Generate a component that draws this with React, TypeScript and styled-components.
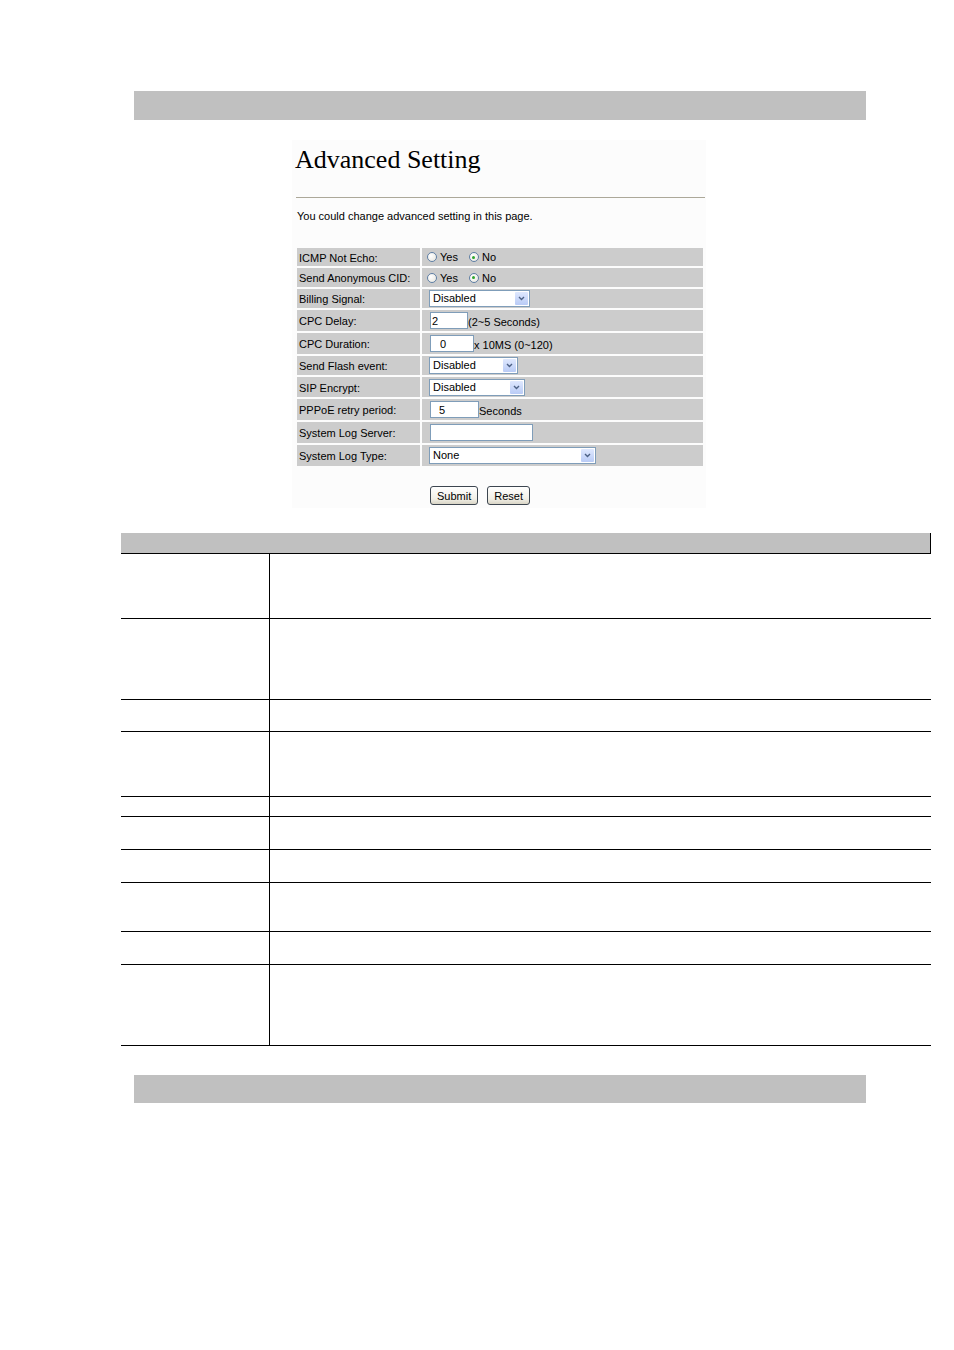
import { Fragment, type ReactNode } from "react";
import styled, { createGlobalStyle } from "styled-components";

const GlobalStyle = createGlobalStyle`
  body {
    margin: 0;
    background: #fff;
    font-family: "Liberation Sans", Arial, sans-serif;
    color: #000;
  }
`;

const Page = styled.div`
  padding: 91px 0 200px;
`;

const GreyBar = styled.div<{ $h: number; $top?: number }>`
  width: 732px;
  height: ${(p) => p.$h}px;
  margin: ${(p) => p.$top || 0}px 0 0 134px;
  background: #c0c0c0;
`;

// web page capture of the router's settings screen
const Panel = styled.div`
  width: 411px;
  margin: 20px 0 0 292px;
  padding: 4px 0 3px 3px;
  background: #fcfcfc;
`;

const Title = styled.h1`
  margin: 0;
  font-family: "Liberation Serif", "Times New Roman", serif;
  font-weight: normal;
  font-size: 26px;
  line-height: 31px;
`;

const Rule = styled.div`
  width: 409px;
  height: 1px;
  margin: 22px 0 0 1px;
  background: #aca899;
`;

const Intro = styled.p`
  margin: 12px 0 0 2px;
  font-size: 11px;
  line-height: 13px;
`;

const FormGrid = styled.div`
  display: grid;
  grid-template-columns: 123px 281px;
  gap: 2px;
  margin: 25px 0 0 2px;
`;

const Label = styled.div<{ $h: number }>`
  height: ${(p) => p.$h}px;
  display: flex;
  align-items: center;
  padding: 1px 0 0 2px;
  box-sizing: border-box;
  background: #cccccc;
  font-size: 11px;
`;

const Value = styled.div<{ $h: number }>`
  height: ${(p) => p.$h}px;
  display: flex;
  align-items: center;
  padding-left: 5px;
  background: #cccccc;
  font-size: 11px;
`;

const RadioDot = styled.span<{ $on?: boolean }>`
  position: relative;
  width: 10px;
  height: 10px;
  box-sizing: border-box;
  border: 1px solid #5f7fa5;
  border-radius: 50%;
  background: radial-gradient(circle at 35% 35%, #ffffff, #e6e4dc);
  margin-right: 3px;

  &::after {
    content: "";
    display: ${(p) => (p.$on ? "block" : "none")};
    position: absolute;
    left: 2.5px;
    top: 2.5px;
    width: 3px;
    height: 3px;
    border-radius: 50%;
    background: #2ea52e;
  }
`;

const RadioText = styled.span`
  margin-right: 11px;
`;

const SelectBox = styled.div<{ $w: number }>`
  display: flex;
  width: ${(p) => p.$w}px;
  height: 17px;
  box-sizing: border-box;
  margin-left: 2px;
  border: 1px solid #7f9db9;
  background: #fff;
`;

const SelectText = styled.span`
  flex: 1;
  padding-left: 3px;
  line-height: 15px;
`;

const SelectArrow = styled.span`
  width: 13px;
  margin: 1px;
  display: flex;
  align-items: center;
  justify-content: center;
  border-radius: 1px;
  background: linear-gradient(#dfe8fe, #b9cbf6);
`;

const TextBox = styled.input<{ $w: number; $pad: number }>`
  width: ${(p) => p.$w}px;
  height: 17px;
  box-sizing: border-box;
  margin: 0 0 0 3px;
  padding: 0 0 0 ${(p) => p.$pad}px;
  border: 1px solid #7f9db9;
  background: #fff;
  font-family: "Liberation Sans", Arial, sans-serif;
  font-size: 11px;
  color: #000;
  outline: none;
`;

const Unit = styled.span`
  padding-top: 3px;
`;

const ButtonRow = styled.div`
  display: flex;
  gap: 9px;
  margin: 20px 0 0 135px;
`;

const FormButton = styled.button`
  height: 19px;
  padding: 0 6px;
  border: 1px solid #3d4650;
  border-radius: 3px;
  background: linear-gradient(#ffffff, #f1efe6 70%, #d9d5c6);
  font-family: "Liberation Sans", Arial, sans-serif;
  font-size: 11px;
  color: #000;
`;

const ParamTable = styled.div`
  width: 810px;
  margin: 25px 0 0 121px;
`;

const ParamHead = styled.div`
  height: 21px;
  box-sizing: border-box;
  background: #c0c0c0;
  border-right: 1px solid #000;
  border-bottom: 1px solid #000;
`;

const ParamRow = styled.div<{ $h: number }>`
  display: grid;
  grid-template-columns: 149px 1fr;
  height: ${(p) => p.$h}px;
  box-sizing: border-box;
  border-bottom: 1px solid #000;
`;

const ParamName = styled.div`
  border-right: 1px solid #000;
`;

const Chevron = () => (
  <svg width="7" height="5" viewBox="0 0 7 5">
    <polyline points="1,1 3.5,3.5 6,1" fill="none" stroke="#4d6185" strokeWidth="1.4" />
  </svg>
);

const Select = ({ w, value }: { w: number; value: string }) => (
  <SelectBox $w={w}>
    <SelectText>{value}</SelectText>
    <SelectArrow>
      <Chevron />
    </SelectArrow>
  </SelectBox>
);

const YesNo = () => (
  <>
    <RadioDot />
    <RadioText>Yes</RadioText>
    <RadioDot $on />
    <RadioText>No</RadioText>
  </>
);

type Field = { label: string; h: number; control: ReactNode };

const fields: Field[] = [
  { label: "ICMP Not Echo:", h: 18, control: <YesNo /> },
  { label: "Send Anonymous CID:", h: 19, control: <YesNo /> },
  { label: "Billing Signal:", h: 19, control: <Select w={101} value="Disabled" /> },
  {
    label: "CPC Delay:",
    h: 21,
    control: (
      <>
        <TextBox $w={38} $pad={1} readOnly value="2" />
        <Unit>(2~5 Seconds)</Unit>
      </>
    ),
  },
  {
    label: "CPC Duration:",
    h: 21,
    control: (
      <>
        <TextBox $w={44} $pad={9} readOnly value="0" />
        <Unit>x 10MS (0~120)</Unit>
      </>
    ),
  },
  { label: "Send Flash event:", h: 19, control: <Select w={89} value="Disabled" /> },
  { label: "SIP Encrypt:", h: 20, control: <Select w={96} value="Disabled" /> },
  {
    label: "PPPoE retry period:",
    h: 21,
    control: (
      <>
        <TextBox $w={49} $pad={8} readOnly value="5" />
        <Unit>Seconds</Unit>
      </>
    ),
  },
  {
    label: "System Log Server:",
    h: 21,
    control: <TextBox $w={103} $pad={2} readOnly value="" />,
  },
  { label: "System Log Type:", h: 21, control: <Select w={167} value="None" /> },
];

const paramRows = [65, 81, 32, 65, 20, 33, 33, 49, 33, 81];

export default function App() {
  return (
    <Page>
      <GlobalStyle />
      <GreyBar $h={29} />

      <Panel>
        <Title>Advanced Setting</Title>
        <Rule />
        <Intro>You could change advanced setting in this page.</Intro>
        <FormGrid>
          {fields.map((f) => (
            <Fragment key={f.label}>
              <Label $h={f.h}>{f.label}</Label>
              <Value $h={f.h}>{f.control}</Value>
            </Fragment>
          ))}
        </FormGrid>
        <ButtonRow>
          <FormButton>Submit</FormButton>
          <FormButton>Reset</FormButton>
        </ButtonRow>
      </Panel>

      <ParamTable>
        <ParamHead />
        {paramRows.map((h, i) => (
          <ParamRow key={i} $h={h}>
            <ParamName />
            <div />
          </ParamRow>
        ))}
      </ParamTable>

      <GreyBar $h={28} $top={29} />
    </Page>
  );
}
